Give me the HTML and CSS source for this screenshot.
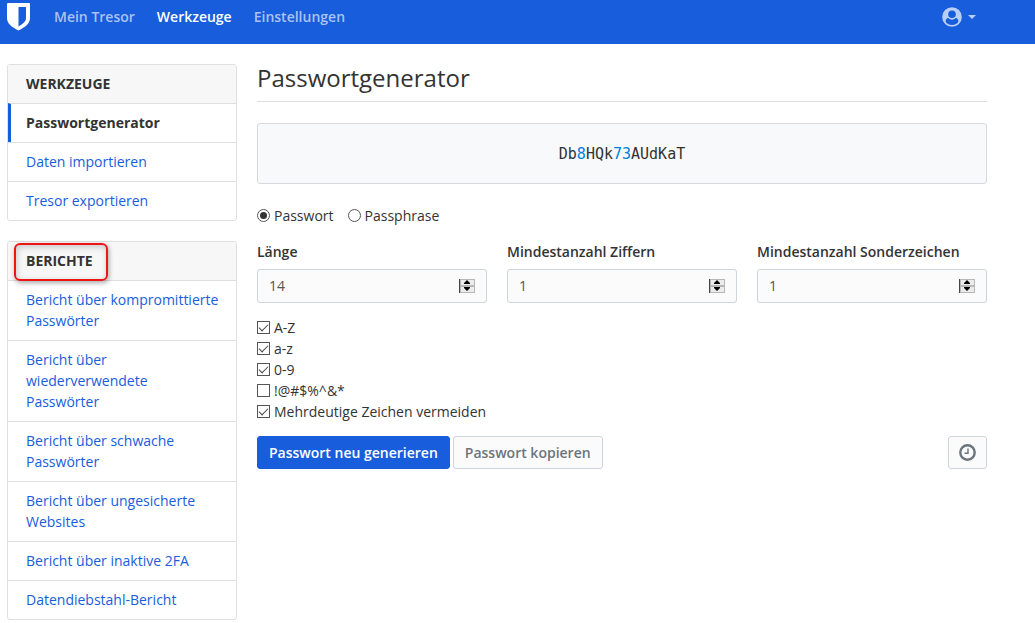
FILE: index.html
```html
<!DOCTYPE html>
<html lang="de">
<head>
<meta charset="utf-8">
<meta name="viewport" content="width=device-width, initial-scale=1">
<title>Passwortgenerator</title>
<link rel="stylesheet" href="styles.css">
</head>
<body>
<header class="navbar">
  <a class="brand" href="#" aria-label="Startseite">
    <svg width="24" height="28" viewBox="0 0 24 28" aria-hidden="true"><path fill="#fff" d="M1 0h21a1 1 0 0 1 1 1v14c0 5.500-4.500 9-11.500 12.500C4.500 24 0 20.500 0 15V1a1 1 0 0 1 1-1z"/><path fill="#175ddc" d="M11.500 4H19v11c0 3.500-3 5.800-7.500 8.500z"/></svg>
  </a>
  <nav class="nav">
    <a href="#">Mein Tresor</a>
    <a class="current" href="#">Werkzeuge</a>
    <a href="#">Einstellungen</a>
  </nav>
  <button class="account" type="button" aria-label="Konto">
    <svg width="20" height="20" viewBox="0 0 20 20" aria-hidden="true"><circle cx="10" cy="10" r="9.800" fill="currentColor"/><path fill="#175ddc" d="M6.300 10.800c.9 1.100 2.200 1.800 3.700 1.800s2.800-.7 3.700-1.800c1.700.3 2.500 1.700 2.700 3.900A8 8 0 0 1 10 18a8 8 0 0 1-6.400-3.300c.2-2.200 1-3.600 2.700-3.900z"/><circle cx="10" cy="7.300" r="5.100" fill="currentColor"/><circle cx="10" cy="7.300" r="3.800" fill="#175ddc"/></svg>
    <svg width="8" height="4" viewBox="0 0 8 4" aria-hidden="true"><path fill="currentColor" d="M0 0h8L4 4z"/></svg>
  </button>
</header>
<div class="page">
  <aside class="sidebar">
    <section class="card">
      <h2 class="card-title">Werkzeuge</h2>
      <a class="item active" href="#">Passwortgenerator</a>
      <a class="item" href="#">Daten importieren</a>
      <a class="item" href="#">Tresor exportieren</a>
    </section>
    <section class="card">
      <h2 class="card-title"><span class="marked">Berichte</span></h2>
      <a class="item" href="#">Bericht über kompromittierte Passwörter</a>
      <a class="item" href="#">Bericht über wiederverwendete Passwörter</a>
      <a class="item" href="#">Bericht über schwache Passwörter</a>
      <a class="item" href="#">Bericht über ungesicherte Websites</a>
      <a class="item" href="#">Bericht über inaktive 2FA</a>
      <a class="item" href="#">Datendiebstahl-Bericht</a>
    </section>
  </aside>
  <main class="content">
    <h1 class="title">Passwortgenerator</h1>
    <div class="password">Db<span class="digit">8</span>HQk<span class="digit">73</span>AUdKaT</div>
    <div class="types">
      <label class="choice"><input type="radio" name="type" checked>Passwort</label>
      <label class="choice"><input type="radio" name="type">Passphrase</label>
    </div>
    <div class="fields">
      <div class="field">
        <label for="length">Länge</label>
        <div class="number"><input id="length" type="number" value="14"><svg class="spinner" width="16" height="14" viewBox="0 0 16 14" aria-hidden="true"><path fill="#b8b8b8" d="M0 0h16v14H0z"/><path fill="#ececec" d="M2 1h13v5H2zM2 8h13v5H2z"/><path fill="#444" d="M0 0h1v14H0z"/><path d="M8 1l3 3v1H5V4zM5 8h6v1l-3 3-3-3z"/></svg></div>
      </div>
      <div class="field">
        <label for="digits">Mindestanzahl Ziffern</label>
        <div class="number"><input id="digits" type="number" value="1"><svg class="spinner" width="16" height="14" viewBox="0 0 16 14" aria-hidden="true"><path fill="#b8b8b8" d="M0 0h16v14H0z"/><path fill="#ececec" d="M2 1h13v5H2zM2 8h13v5H2z"/><path fill="#444" d="M0 0h1v14H0z"/><path d="M8 1l3 3v1H5V4zM5 8h6v1l-3 3-3-3z"/></svg></div>
      </div>
      <div class="field">
        <label for="special">Mindestanzahl Sonderzeichen</label>
        <div class="number"><input id="special" type="number" value="1"><svg class="spinner" width="16" height="14" viewBox="0 0 16 14" aria-hidden="true"><path fill="#b8b8b8" d="M0 0h16v14H0z"/><path fill="#ececec" d="M2 1h13v5H2zM2 8h13v5H2z"/><path fill="#444" d="M0 0h1v14H0z"/><path d="M8 1l3 3v1H5V4zM5 8h6v1l-3 3-3-3z"/></svg></div>
      </div>
    </div>
    <div class="options">
      <label class="choice"><input type="checkbox" checked>A-Z</label>
      <label class="choice"><input type="checkbox" checked>a-z</label>
      <label class="choice"><input type="checkbox" checked>0-9</label>
      <label class="choice"><input type="checkbox">!@#$%^&amp;*</label>
      <label class="choice"><input type="checkbox" checked>Mehrdeutige Zeichen vermeiden</label>
    </div>
    <div class="actions">
      <button class="btn primary" type="button">Passwort neu generieren</button>
      <button class="btn" type="button">Passwort kopieren</button>
      <button class="btn history" type="button" aria-label="Passwortverlauf"><svg width="17" height="17" viewBox="0 0 17 17" fill="none" stroke="currentColor" aria-hidden="true"><circle cx="8.500" cy="8.500" r="7.200" stroke-width="2.400"/><path stroke-width="1.400" d="M9 4.500v4.700H5.500"/></svg></button>
    </div>
  </main>
</div>
</body>
</html>
```

FILE: styles.css
```css
* { box-sizing: border-box; }
body {
  margin: 0;
  background: #fff;
  color: #333;
  font: 14px/21px "Open Sans", "Noto Sans", sans-serif;
}
a { color: #175ddc; text-decoration: none; }
button, input { font: inherit; }

.navbar {
  display: flex;
  align-items: flex-start;
  height: 44px;
  padding: 3px 59px 0 7px;
  background: #175ddc;
}
.brand { display: flex; }
.nav { display: flex; gap: 22px; padding: 3px 0 0 23px; }
.nav a { color: #a9c3f2; font-weight: 600; }
.nav a.current { color: #fff; }
.account {
  display: flex;
  align-items: center;
  gap: 6px;
  margin: 4px 0 0 auto;
  padding: 0;
  border: 0;
  background: none;
  color: #b9cff5;
}

.page {
  display: grid;
  grid-template-columns: 230px minmax(0, 1fr);
  gap: 20px;
  align-items: start;
  padding: 20px 48px 0 7px;
}
.sidebar { display: grid; gap: 20px; }
.card {
  border: 1px solid #dfdfdf;
  border-radius: 3px;
}
.card-title {
  margin: 0;
  padding: 8px 17px 9px 18px;
  border-radius: 2px 2px 0 0;
  background: #f7f7f7;
  font-size: 14px;
  line-height: 21px;
  font-weight: 700;
  text-transform: uppercase;
}
.item {
  display: block;
  padding: 8px 17px 9px 18px;
  border-top: 1px solid #dfdfdf;
}
.item.active {
  padding-left: 15px;
  border-left: 3px solid #175ddc;
  color: #333;
  font-weight: 700;
}
.marked { position: relative; }
.marked::after {
  content: "";
  position: absolute;
  inset: -8px -15px -11px -12px;
  border: 2px solid #f01515;
  border-radius: 6px;
  box-shadow: 1px 2px 5px #0005, inset 1px 2px 6px #0003;
}

.title {
  margin: 0 0 21px;
  padding-bottom: 9px;
  border-bottom: 1px solid #dfdfdf;
  font-size: 24px;
  line-height: 28px;
  font-weight: 400;
}
.password {
  padding: 20px 20px 18px;
  border: 1px solid #d7d9dc;
  border-radius: 3px;
  background: #f8f9fa;
  font-family: "DejaVu Sans Mono", monospace;
  font-size: 15px;
  text-align: center;
}
.digit { color: #007fde; }

.types { display: flex; gap: 14px; margin: 21px 0 15px; }
.choice { display: flex; align-items: center; gap: 4px; }
.choice input {
  appearance: none;
  display: grid;
  place-content: center;
  width: 13px;
  height: 13px;
  margin: 0;
  border: 1px solid #555;
  background: #fff;
}
.choice input[type="radio"] { border-radius: 50%; }
.choice input[type="radio"]:checked::before {
  content: "";
  width: 7px;
  height: 7px;
  border-radius: 50%;
  background: #333;
}
.choice input[type="checkbox"]:checked::before {
  content: "";
  width: 8px;
  height: 4px;
  border: solid #444;
  border-width: 0 0 1px 1px;
  transform: translateY(-1px) rotate(-45deg);
}

.fields {
  display: grid;
  grid-template-columns: repeat(3, minmax(0, 1fr));
  gap: 20px;
}
.field { display: grid; gap: 7px; }
.field label { font-weight: 600; }
.number { position: relative; }
.number input {
  display: block;
  width: 100%;
  height: 34px;
  padding: 0 32px 1px 11px;
  border: 1px solid #ced4dc;
  border-radius: 3px;
  background: #fbfbfb;
  color: #555;
  appearance: textfield;
}
.spinner {
  position: absolute;
  top: 10px;
  right: 12px;
  pointer-events: none;
}

.options { margin: 14px 0; }
.actions { display: flex; gap: 3px; }
.btn {
  height: 33px;
  padding: 0 11px;
  border: 1px solid #ced4dc;
  border-radius: 3px;
  background: #fbfbfb;
  color: #6c757d;
  font-weight: 600;
}
.btn.primary { border-color: #175ddc; background: #175ddc; color: #fff; }
.btn.history {
  display: flex;
  align-items: center;
  margin-left: auto;
  padding: 0 10px;
}
```
